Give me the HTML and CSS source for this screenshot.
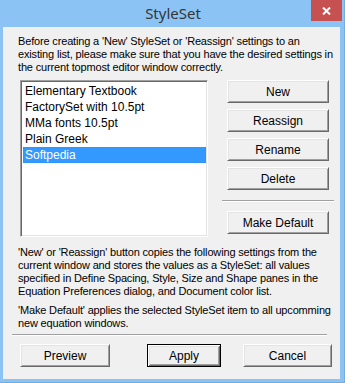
FILE: index.html
```html
<!DOCTYPE html>
<html>
<head>
<meta charset="utf-8">
<title>StyleSet</title>
<link rel="stylesheet" href="styles.css">
</head>
<body>
<div class="window">
  <div class="titlebar">
    <span class="spacer"></span>
    <span class="title">StyleSet</span>
    <span class="close">
      <svg width="9" height="8" viewBox="0 0 9 8"><path d="M1 0.5 L8 7.5 M8 0.5 L1 7.5" stroke="#fff" stroke-width="2" fill="none"/></svg>
    </span>
  </div>
  <div class="client">
    <p class="intro">Before creating a 'New' StyleSet or 'Reassign' settings to an existing list, please make sure that you have the desired settings in the current topmost editor window correctly.</p>
    <div class="middle">
      <ul class="listbox">
        <li>Elementary Textbook</li>
        <li>FactorySet with 10.5pt</li>
        <li>MMa fonts 10.5pt</li>
        <li>Plain Greek</li>
        <li class="selected">Softpedia</li>
      </ul>
      <div class="side">
        <button class="btn">New</button>
        <button class="btn">Reassign</button>
        <button class="btn">Rename</button>
        <button class="btn">Delete</button>
        <hr class="sep-small">
        <button class="btn">Make Default</button>
      </div>
    </div>
    <p class="info">'New' or 'Reassign' button copies the following settings from the current window and stores the values as a StyleSet: all values specified in Define Spacing, Style, Size and Shape panes in the Equation Preferences dialog, and Document color list.</p>
    <p class="info second">'Make Default' applies the selected StyleSet item to all upcomming new equation windows.</p>
    <hr class="sep-wide">
    <div class="bottom">
      <button class="btn preview">Preview</button>
      <button class="btn apply">Apply</button>
      <button class="btn cancel">Cancel</button>
    </div>
  </div>
</div>
</body>
</html>
```

FILE: styles.css
```css
* { box-sizing: border-box; }
html, body { margin: 0; padding: 0; }
body {
  width: 345px;
  height: 383px;
  overflow: hidden;
  font-family: "Liberation Sans", Arial, sans-serif;
  font-size: 11px;
  color: #000;
}
.window {
  width: 345px;
  height: 383px;
  background: #8bc4f4;
  padding: 0 4px 3px 3px;
  display: flex;
  flex-direction: column;
  border-right: 1px solid #75addf;
  border-bottom: 1px solid #75addf;
}
.titlebar {
  height: 27px;
  display: grid;
  grid-template-columns: 1fr auto 1fr;
  align-items: start;
}
.title {
  font-family: "Noto Sans", "Open Sans", sans-serif;
  font-size: 15px;
  color: #363636;
  line-height: 27px;
  padding-left: 3px;
}
.close {
  justify-self: end;
  margin-right: -2px;
  width: 31px;
  height: 21px;
  background: #c75050;
  display: flex;
  align-items: center;
  justify-content: center;
}
.close svg { display: block; }
.client {
  flex: 1;
  background: #f0f0f0;
  padding: 8px 6px 0 15px;
  display: flex;
  flex-direction: column;
}
p { margin: 0; letter-spacing: -0.16px; }
.intro {
  line-height: 13px;
  width: 318px;
}
.middle {
  display: flex;
  margin-top: 6px;
  padding-left: 2px;
}
.listbox {
  list-style: none;
  margin: 0;
  padding: 2px 1px 1px;
  width: 188px;
  height: 157px;
  background: #fff;
  border: 1px solid;
  border-color: #a0a0a0 #fff #fff #a0a0a0;
  box-shadow: inset 1px 1px 0 #696969, inset -1px -1px 0 #e3e3e3;
  font-size: 12px;
}
.listbox li {
  height: 16px;
  line-height: 14px;
  padding-left: 1px;
  margin-left: 1px;
  border: 1px solid transparent;
  white-space: nowrap;
}
.listbox li.selected {
  background: #3399ff;
  color: #fff;
  border: 1px dotted #d16a12;
}
.side {
  display: flex;
  flex-direction: column;
  margin-left: 19px;
  width: 102px;
}
.btn {
  font-family: "Liberation Sans", Arial, sans-serif;
  font-size: 12px;
  color: #000;
  height: 23px;
  width: 102px;
  padding: 0;
  background: #f0f0f0;
  border: 1px solid;
  border-color: #fff #696969 #696969 #fff;
  box-shadow: inset 1px 1px 0 #e3e3e3, inset -1px -1px 0 #a0a0a0;
}
.side .btn + .btn { margin-top: 6px; }
.sep-small {
  margin: 10px -5px 0 -5px;
  border: 0;
  border-top: 1px solid #a0a0a0;
  border-bottom: 1px solid #fff;
  height: 0;
}
.side .sep-small + .btn { margin-top: 9px; }
.info {
  line-height: 13px;
  margin-top: 9px;
  width: 320px;
}
.info.second { margin-top: 6px; }
.sep-wide {
  margin: 4px 7px 0 -6px;
  border: 0;
  border-top: 1px solid #a0a0a0;
  border-bottom: 1px solid #fff;
  height: 0;
}
.bottom {
  display: flex;
  margin-top: 8px;
  padding-left: 2px;
}
.bottom .btn { height: 23px; }
.preview { width: 90px; }
.apply {
  width: 74px;
  margin-left: 37px;
  border-color: #000;
  box-shadow: inset 1px 1px 0 #fff, inset -1px -1px 0 #696969, inset 2px 2px 0 #e3e3e3, inset -2px -2px 0 #a0a0a0;
}
.cancel {
  width: 89px;
  margin-left: 22px;
}
```
